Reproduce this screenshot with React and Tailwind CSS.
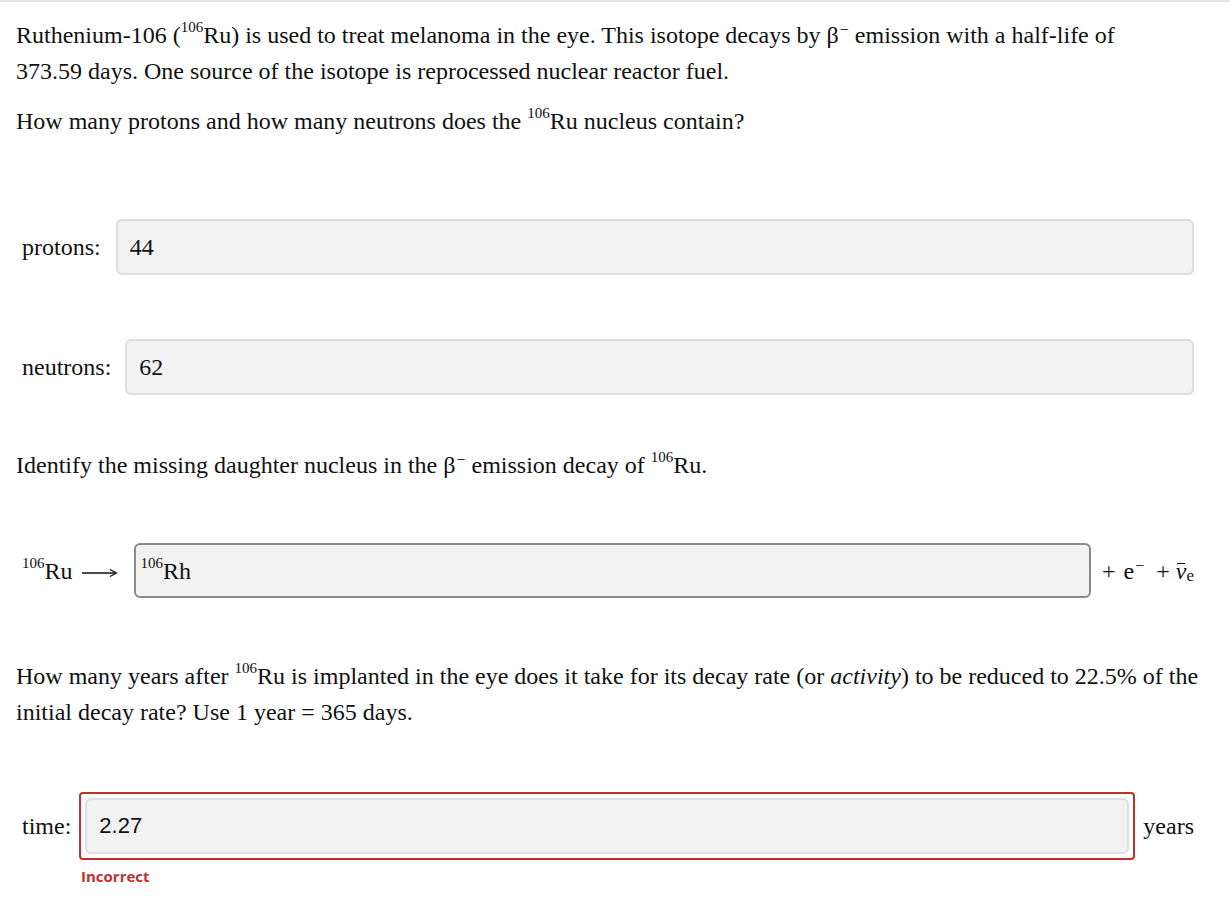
import React from 'react';

const serif = { fontFamily: '"Liberation Serif", "Times New Roman", serif' };

function Iso({ mass, sym }) {
  return (
    <span className="whitespace-nowrap">
      <span className="relative -top-[11px] text-[15px] leading-none">{mass}</span>
      {sym}
    </span>
  );
}

function Minus() {
  return <span className="relative -top-[8px] text-[16px] leading-none ml-[1px]">−</span>;
}

function Field({ value, sans }) {
  return (
    <div className="flex-1 h-[56px] flex items-center rounded-[6px] border-2 border-[#dedede] bg-[#f2f2f2] px-[12px]">
      <span className={sans ? 'text-[22px]' : 'text-[24px]'} style={sans ? { fontFamily: '"Liberation Sans", Arial, sans-serif' } : undefined}>{value}</span>
    </div>
  );
}

function Arrow() {
  return (
    <svg width="36" height="12" viewBox="0 0 36 12" className="inline-block ml-[9px] align-middle">
      <line x1="0" y1="6" x2="33" y2="6" stroke="#111" strokeWidth="1.3" />
      <path d="M28 2.5 L34.5 6 L28 9.5" fill="none" stroke="#111" strokeWidth="1.3" />
    </svg>
  );
}

export default function App() {
  return (
    <div className="min-h-[912px] bg-white text-[#111] text-[24px] leading-[36px]" style={serif}>
      <div className="h-[2px] bg-[#e6e6e6]" />
      <div className="pl-[16px] pr-[16px] pt-[15px]">
        <p className="pr-[40px]">
          Ruthenium-106 (<Iso mass="106" sym="Ru" />) is used to treat melanoma in the eye. This isotope decays by β<Minus /> emission with a half-life of 373.59 days. One source of the isotope is reprocessed nuclear reactor fuel.
        </p>
        <p className="mt-[14px]">
          How many protons and how many neutrons does the <Iso mass="106" sym="Ru" /> nucleus contain?
        </p>
      </div>

      <div className="pl-[22px] pr-[36px]">
        <div className="mt-[80px] flex items-center gap-[15px]">
          <span>protons:</span>
          <Field value="44" />
        </div>
        <div className="mt-[64px] flex items-center gap-[14px]">
          <span>neutrons:</span>
          <Field value="62" />
        </div>
      </div>

      <p className="pl-[16px] mt-[52px]">
        Identify the missing daughter nucleus in the β<Minus /> emission decay of <Iso mass="106" sym="Ru" />.
      </p>

      <div className="pl-[22px] pr-[36px] mt-[60px] flex items-center">
        <span className="whitespace-nowrap"><Iso mass="106" sym="Ru" /><Arrow /></span>
        <div className="ml-[16px] flex-1 h-[55px] flex items-center rounded-[6px] border-2 border-[#8a8a8a] bg-[#f2f2f2] px-[5px]">
          <Iso mass="106" sym="Rh" />
        </div>
        <span className="ml-[11px] whitespace-nowrap flex items-center">
          <span>+</span>
          <span className="ml-[8px]">e<Minus /></span>
          <span className="ml-[12px]">+</span>
          <span className="ml-[6px] relative inline-block italic">
            ν
            <span className="absolute left-[1px] right-[1px] top-[10px] h-[1.5px] bg-[#111]" />
          </span>
          <span className="text-[17px] relative top-[5px]">e</span>
        </span>
      </div>

      <div className="pl-[16px] pr-[16px] mt-[60px]">
        <p>
          How many years after <Iso mass="106" sym="Ru" /> is implanted in the eye does it take for its decay rate (or <i>activity</i>) to be reduced to 22.5% of the initial decay rate? Use 1 year = 365 days.
        </p>
      </div>

      <div className="pl-[22px] pr-[36px] mt-[62px]">
        <div className="flex items-center">
          <span>time:</span>
          <div className="ml-[8px] flex-1 rounded-[4px] border-2 border-[#c0302f] p-[4px]">
            <Field value="2.27" sans />
          </div>
          <span className="ml-[8px]">years</span>
        </div>
        <div className="pl-[59px] mt-[5px] text-[15px] leading-[22px] font-bold text-[#c62f2f]" style={{ fontFamily: '"Open Sans", "Noto Sans", sans-serif' }}>
          Incorrect
        </div>
      </div>
    </div>
  );
}
